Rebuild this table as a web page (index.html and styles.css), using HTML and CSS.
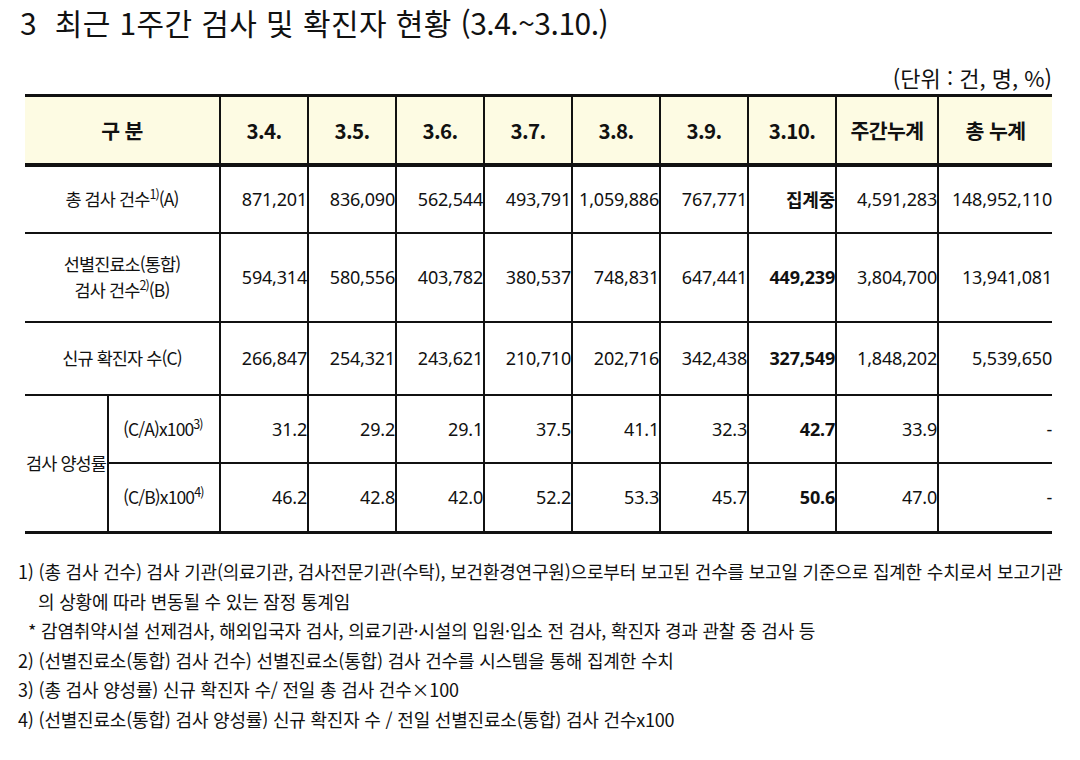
FILE: index.html
```html
<!DOCTYPE html>
<html lang="ko">
<head>
<meta charset="utf-8">
<link rel="stylesheet" href="styles.css">
</head>
<body>
<div class="page">
  <h1 class="title">3&nbsp; 최근 1주간 검사 및 확진자 현황 <span class="title-range">(3.4.~3.10.)</span></h1>
  <div class="unit">(단위 : 건, 명, %)</div>
  <table class="stats">
    <colgroup>
      <col class="c-lab1"><col class="c-lab2">
      <col class="c-day"><col class="c-day"><col class="c-day"><col class="c-day"><col class="c-day"><col class="c-day"><col class="c-day">
      <col class="c-week"><col class="c-total">
    </colgroup>
    <thead>
      <tr class="r-head">
        <th colspan="2" class="lab">구 분</th>
        <th>3.4.</th><th>3.5.</th><th>3.6.</th><th>3.7.</th><th>3.8.</th><th>3.9.</th><th>3.10.</th>
        <th>주간누계</th><th>총 누계</th>
      </tr>
    </thead>
    <tbody>
      <tr class="r1">
        <td colspan="2" class="lab">총 검사 건수<sup>1)</sup>(A)</td>
        <td>871,201</td><td>836,090</td><td>562,544</td><td>493,791</td><td>1,059,886</td><td>767,771</td><td class="b">집계중</td><td>4,591,283</td><td>148,952,110</td>
      </tr>
      <tr class="r2">
        <td colspan="2" class="lab">선별진료소(통합)<br>검사 건수<sup>2)</sup>(B)</td>
        <td>594,314</td><td>580,556</td><td>403,782</td><td>380,537</td><td>748,831</td><td>647,441</td><td class="b">449,239</td><td>3,804,700</td><td>13,941,081</td>
      </tr>
      <tr class="r3">
        <td colspan="2" class="lab">신규 확진자 수(C)</td>
        <td>266,847</td><td>254,321</td><td>243,621</td><td>210,710</td><td>202,716</td><td>342,438</td><td class="b">327,549</td><td>1,848,202</td><td>5,539,650</td>
      </tr>
      <tr class="r4">
        <td rowspan="2" class="lab group">검사 양성률</td>
        <td class="lab sub">(C/A)x100<sup>3)</sup></td>
        <td>31.2</td><td>29.2</td><td>29.1</td><td>37.5</td><td>41.1</td><td>32.3</td><td class="b">42.7</td><td>33.9</td><td>-</td>
      </tr>
      <tr class="r5">
        <td class="lab sub">(C/B)x100<sup>4)</sup></td>
        <td>46.2</td><td>42.8</td><td>42.0</td><td>52.2</td><td>53.3</td><td>45.7</td><td class="b">50.6</td><td>47.0</td><td>-</td>
      </tr>
    </tbody>
  </table>
  <ol class="notes">
    <li>1) (총 검사 건수) 검사 기관(의료기관, 검사전문기관(수탁), 보건환경연구원)으로부터 보고된 건수를 보고일 기준으로 집계한 수치로서 보고기관</li>
    <li class="indent">의 상황에 따라 변동될 수 있는 잠정 통계임</li>
    <li class="star">* 감염취약시설 선제검사, 해외입국자 검사, 의료기관·시설의 입원·입소 전 검사, 확진자 경과 관찰 중 검사 등</li>
    <li>2) (선별진료소(통합) 검사 건수) 선별진료소(통합) 검사 건수를 시스템을 통해 집계한 수치</li>
    <li>3) (총 검사 양성률) 신규 확진자 수/ 전일 총 검사 건수×100</li>
    <li>4) (선별진료소(통합) 검사 양성률) 신규 확진자 수 / 전일 선별진료소(통합) 검사 건수x100</li>
  </ol>
</div>
</body>
</html>
```
FILE: styles.css
```css
* { box-sizing: border-box; }
body {
  margin: 0;
  background: #ffffff;
  color: #111111;
  font-family: "Noto Sans CJK KR", "Noto Sans", sans-serif;
}
.page {
  padding: 3px 0 0 0;
  width: 1080px;
}
.title {
  margin: 0 0 0 20px;
  font-size: 30px;
  font-weight: 400;
  line-height: 38px;
  letter-spacing: 0.4px;
  white-space: nowrap;
}
.title-range {
  letter-spacing: -0.5px;
}
.unit {
  margin: 22px 28px 0 0;
  text-align: right;
  font-size: 22px;
  line-height: 28px;
  letter-spacing: 0;
}
.stats {
  margin: 3px 0 0 25px;
  width: 1027px;
  border-collapse: collapse;
  table-layout: fixed;
}
.c-lab1 { width: 83px; }
.c-lab2 { width: 112px; }
.c-day { width: 88px; }
.c-week { width: 102px; }
.c-total { width: 114px; }
.stats th, .stats td {
  border: 2px solid #111;
  padding: 0;
  white-space: nowrap;
}
.stats th:first-child, .stats tr > td:first-child { border-left: none; }
.stats th:last-child, .stats td:last-child { border-right: none; }
.stats thead th {
  background: #fdfbe3;
  font-size: 20.5px;
  font-weight: 600;
  letter-spacing: -0.6px;
  border-top: 3px solid #111;
  border-bottom: 4px solid #111;
  text-align: center;
}
.stats tbody td {
  text-align: right;
  font-family: "Noto Sans", "Noto Sans CJK KR", sans-serif;
  font-size: 18px;
  letter-spacing: -0.2px;
}
.stats tbody td.lab {
  text-align: center;
  font-family: "Noto Sans CJK KR", sans-serif;
  font-size: 17.5px;
  letter-spacing: -0.9px;
  line-height: 26px;
}
.stats tbody td.group { text-align: left; padding-left: 1px; }
.stats tbody td.sub { text-align: left; padding-left: 14px; }
.stats td.b { font-weight: 700; }
.stats sup {
  font-size: 12.5px;
  line-height: 0;
  vertical-align: 7px;
}
.r-head { height: 69px; }
.r1 { height: 68px; }
.r2 { height: 89px; }
.r3 { height: 73px; }
.r4 { height: 68px; }
.r5 { height: 70px; }
.r5 td { border-bottom: 3px solid #111; }
.r4 td.group { border-bottom: 3px solid #111; }
.notes {
  list-style: none;
  margin: 23px 0 0 18px;
  padding: 0;
  font-size: 18px;
  letter-spacing: -0.2px;
  white-space: nowrap;
}
.notes li {
  margin: 0;
  height: 29.5px;
  line-height: 29.5px;
}
.notes .indent { padding-left: 20px; }
.notes .star { padding-left: 10px; }
```
